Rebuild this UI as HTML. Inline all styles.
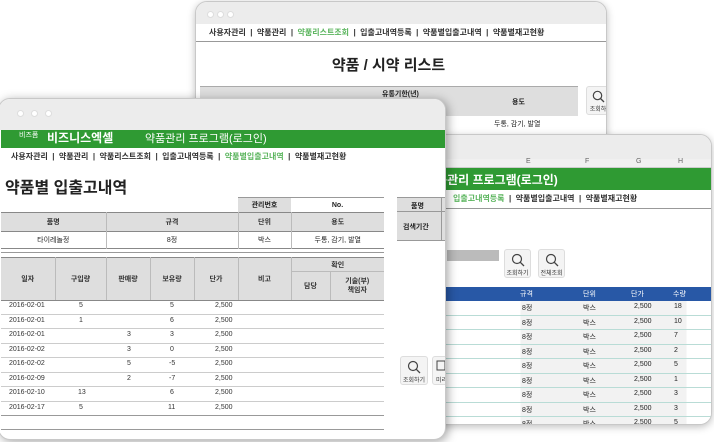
<!DOCTYPE html>
<html><head><meta charset="utf-8"><style>
*{margin:0;padding:0;box-sizing:border-box}
body{width:714px;height:442px;background:#fff;position:relative;overflow:hidden;font-family:"Liberation Sans","Noto Sans CJK KR",sans-serif;color:#222}
.win{position:absolute;background:#fff;border:1px solid #c8c8c8;border-radius:12px;overflow:hidden;box-shadow:0 2px 8px rgba(0,0,0,.25)}
.tb{position:absolute;left:0;right:0;top:0;background:#ececec}
.dot{position:absolute;width:7px;height:7px;border-radius:50%;background:#fff;border:1px solid #ddd}
.a{position:absolute;white-space:nowrap}
.s{font-size:7px}
.n{font-size:8px;font-weight:bold;color:#333}
.g{background:#2f9a33}
table{border-collapse:collapse;position:absolute;font-size:7px}
td{text-align:center;white-space:nowrap}
.h td{background:#dedede;font-weight:bold;color:#333}
.btn{position:absolute;width:27px;height:29px;border:1px solid #ddd;border-radius:3px;background:#f4f4f4;font-size:6px;text-align:center;color:#333}
.btn svg{display:block;margin:3px auto 1px}
</style></head><body>

<!-- back window -->
<div class="win" style="left:195px;top:1px;width:412px;height:160px">
 <div class="tb" style="height:22px"></div>
 <div class="dot" style="left:11px;top:9px"></div><div class="dot" style="left:21px;top:9px"></div><div class="dot" style="left:31px;top:9px"></div>
 <div class="a n" style="left:13px;top:25px;font-size:8px">사용자관리 &nbsp;|&nbsp; 약품관리 &nbsp;|&nbsp; <span style="color:#5bb55e">약품리스트조회</span> &nbsp;|&nbsp; 입출고내역등록 &nbsp;|&nbsp; 약품별입출고내역 &nbsp;|&nbsp; 약품별재고현황</div>
 <div style="position:absolute;left:0;right:0;top:39px;border-top:1px solid #999"></div>
 <div class="a" style="left:0;width:385px;text-align:center;top:52px;font-size:15px;font-weight:bold">약품 / 시약 리스트</div>
 <div style="position:absolute;left:4px;top:84px;width:378px;height:30px;background:#dedede;border-top:1px solid #aaa"></div>
 <div class="a s" style="left:186px;top:87px;font-weight:bold">유통기한(년)</div>
 <div class="a s" style="left:316px;top:95px;font-weight:bold">용도</div>
 <div class="a s" style="left:298px;top:117px">두통, 감기, 발열</div>
 <div class="btn" style="left:390px;top:84px;width:24px">
  <svg width="13" height="13" viewBox="0 0 13 13"><circle cx="5.5" cy="5.5" r="4.2" fill="none" stroke="#444" stroke-width="1.2"/><path d="M8.5 8.5L12 12" stroke="#444" stroke-width="1.3"/></svg>조회하</div>
</div>

<!-- middle window -->
<div class="win" style="left:380px;top:134px;width:332px;height:291px">
 <div class="tb" style="height:24px"></div>
 <div style="position:absolute;left:0;right:0;top:24px;height:9px;background:#f0f0f0;border-bottom:1px solid #ccc"></div>
 <div class="a s" style="left:145px;top:23px;color:#666">E</div><div class="a s" style="left:204px;top:23px;color:#666">F</div><div class="a s" style="left:255px;top:23px;color:#666">G</div><div class="a s" style="left:297px;top:23px;color:#666">H</div>
 <div class="g" style="position:absolute;left:0;right:0;top:33px;height:22px"></div>
 <div class="a" style="left:44px;top:36px;color:#fff;font-size:12px;font-weight:bold">약품관리 프로그램(로그인)</div>
 <div class="a n" style="left:72px;top:58px"><span style="color:#5bb55e">입출고내역등록</span> &nbsp;|&nbsp; 약품별입출고내역 &nbsp;|&nbsp; 약품별재고현황</div>
 <div style="position:absolute;left:0;right:0;top:73px;border-top:1px solid #999"></div>
 <div style="position:absolute;left:66px;top:115px;width:52px;height:11px;background:#bbb"></div>
 <div class="btn" style="left:123px;top:114px">
  <svg width="14" height="14" viewBox="0 0 14 14"><circle cx="6" cy="6" r="4.5" fill="none" stroke="#444" stroke-width="1.2"/><path d="M9.2 9.2L13 13" stroke="#444" stroke-width="1.3"/></svg>조회하기</div>
 <div class="btn" style="left:157px;top:114px">
  <svg width="14" height="14" viewBox="0 0 14 14"><circle cx="6" cy="6" r="4.5" fill="none" stroke="#444" stroke-width="1.2"/><path d="M9.2 9.2L13 13" stroke="#444" stroke-width="1.3"/></svg>전체조회</div>
 <div style="position:absolute;left:0;right:0;top:152px;height:14px;background:#2858a6"></div>
 <div class="a s" style="left:139px;top:154px;color:#fff">규격</div><div class="a s" style="left:202px;top:154px;color:#fff">단위</div><div class="a s" style="left:250px;top:154px;color:#fff">단가</div><div class="a s" style="left:292px;top:154px;color:#fff">수량</div>
 <div style="position:absolute;left:0;top:166px;width:332px">
  <div style="height:14.5px;border-bottom:1px solid #b9dcd6;font-size:7px;position:relative;background:linear-gradient(90deg,#fff 0,#fff 42%,#f2f2f2 42%,#f2f2f2 92%,#fff 92%)"><span class="a" style="left:141px;top:2px">8정</span><span class="a" style="left:202px;top:2px">박스</span><span class="a" style="left:253px;top:2px">2,500</span><span class="a" style="left:293px;top:2px">18</span></div>
  <div style="height:14.5px;border-bottom:1px solid #b9dcd6;font-size:7px;position:relative;background:linear-gradient(90deg,#fff 0,#fff 42%,#f2f2f2 42%,#f2f2f2 92%,#fff 92%)"><span class="a" style="left:141px;top:2px">8정</span><span class="a" style="left:202px;top:2px">박스</span><span class="a" style="left:253px;top:2px">2,500</span><span class="a" style="left:293px;top:2px">10</span></div>
  <div style="height:14.5px;border-bottom:1px solid #b9dcd6;font-size:7px;position:relative;background:linear-gradient(90deg,#fff 0,#fff 42%,#f2f2f2 42%,#f2f2f2 92%,#fff 92%)"><span class="a" style="left:141px;top:2px">8정</span><span class="a" style="left:202px;top:2px">박스</span><span class="a" style="left:253px;top:2px">2,500</span><span class="a" style="left:293px;top:2px">7</span></div>
  <div style="height:14.5px;border-bottom:1px solid #b9dcd6;font-size:7px;position:relative;background:linear-gradient(90deg,#fff 0,#fff 42%,#f2f2f2 42%,#f2f2f2 92%,#fff 92%)"><span class="a" style="left:141px;top:2px">8정</span><span class="a" style="left:202px;top:2px">박스</span><span class="a" style="left:253px;top:2px">2,500</span><span class="a" style="left:293px;top:2px">2</span></div>
  <div style="height:14.5px;border-bottom:1px solid #b9dcd6;font-size:7px;position:relative;background:linear-gradient(90deg,#fff 0,#fff 42%,#f2f2f2 42%,#f2f2f2 92%,#fff 92%)"><span class="a" style="left:141px;top:2px">8정</span><span class="a" style="left:202px;top:2px">박스</span><span class="a" style="left:253px;top:2px">2,500</span><span class="a" style="left:293px;top:2px">5</span></div>
  <div style="height:14.5px;border-bottom:1px solid #b9dcd6;font-size:7px;position:relative;background:linear-gradient(90deg,#fff 0,#fff 42%,#f2f2f2 42%,#f2f2f2 92%,#fff 92%)"><span class="a" style="left:141px;top:2px">8정</span><span class="a" style="left:202px;top:2px">박스</span><span class="a" style="left:253px;top:2px">2,500</span><span class="a" style="left:293px;top:2px">1</span></div>
  <div style="height:14.5px;border-bottom:1px solid #b9dcd6;font-size:7px;position:relative;background:linear-gradient(90deg,#fff 0,#fff 42%,#f2f2f2 42%,#f2f2f2 92%,#fff 92%)"><span class="a" style="left:141px;top:2px">8정</span><span class="a" style="left:202px;top:2px">박스</span><span class="a" style="left:253px;top:2px">2,500</span><span class="a" style="left:293px;top:2px">3</span></div>
  <div style="height:14.5px;border-bottom:1px solid #b9dcd6;font-size:7px;position:relative;background:linear-gradient(90deg,#fff 0,#fff 42%,#f2f2f2 42%,#f2f2f2 92%,#fff 92%)"><span class="a" style="left:141px;top:2px">8정</span><span class="a" style="left:202px;top:2px">박스</span><span class="a" style="left:253px;top:2px">2,500</span><span class="a" style="left:293px;top:2px">3</span></div>
  <div style="height:14.5px;font-size:7px;position:relative;background:linear-gradient(90deg,#fff 0,#fff 42%,#f2f2f2 42%,#f2f2f2 92%,#fff 92%)"><span class="a" style="left:141px;top:2px">8정</span><span class="a" style="left:202px;top:2px">박스</span><span class="a" style="left:253px;top:2px">2,500</span><span class="a" style="left:293px;top:2px">5</span></div>
 </div>
</div>

<!-- front window -->
<div class="win" style="left:-2px;top:98px;width:448px;height:342px;box-shadow:2px 2px 10px rgba(0,0,0,.35)">
 <div class="tb" style="height:31px"></div>
 <div class="dot" style="left:18px;top:11px"></div><div class="dot" style="left:32px;top:11px"></div><div class="dot" style="left:46px;top:11px"></div>
 <div class="g" style="position:absolute;left:2px;right:0;top:31px;height:18px"></div>
 <div class="a" style="left:20px;top:31px;color:#fff;font-size:7px">비즈폼</div>
 <div class="a" style="left:48px;top:30px;color:#fff;font-size:12px;font-weight:bold">비즈니스엑셀</div>
 <div class="a" style="left:146px;top:31px;color:#fff;font-size:11px">약품관리 프로그램(로그인)</div>
 <div class="a n" style="left:12px;top:52px">사용자관리 &nbsp;|&nbsp; 약품관리 &nbsp;|&nbsp; 약품리스트조회 &nbsp;|&nbsp; 입출고내역등록 &nbsp;|&nbsp; <span style="color:#5bb55e">약품별입출고내역</span> &nbsp;|&nbsp; 약품별재고현황</div>
 <div class="a" style="left:6px;top:75px;font-size:16px;font-weight:bold">약품별 입출고내역</div>

 <table style="left:2px;top:98px;width:383px">
  <tr style="height:15px"><td style="width:105px;border:0"></td><td style="width:132px;border:0"></td><td style="width:53px;background:#dedede;font-weight:bold;border-top:1px solid #999">관리번호</td><td style="width:93px;border-top:1px solid #999;font-weight:bold">No.</td></tr>
  <tr class="h" style="height:19px;border-top:1px solid #888"><td style="border-right:1px solid #bbb">품명</td><td style="border-right:1px solid #bbb">규격</td><td style="border-right:1px solid #bbb">단위</td><td style="border-right:0">용도</td></tr>
  <tr style="height:17px;border-top:1px solid #888;border-bottom:1px solid #888"><td style="border-right:1px solid #bbb">타이레놀정</td><td style="border-right:1px solid #bbb">8정</td><td style="border-right:1px solid #bbb">박스</td><td>두통, 감기, 발열</td></tr>
 </table>
 <div style="position:absolute;left:2px;top:153px;width:383px;border-top:1px solid #999"></div>

 <table style="left:2px;top:158px;width:383px">
  <tr class="h" style="height:14px;border-top:1px solid #888"><td rowspan="2" style="width:54px;border-right:1px solid #bbb">일자</td><td rowspan="2" style="width:51px;border-right:1px solid #bbb">구입량</td><td rowspan="2" style="width:44px;border-right:1px solid #bbb">판매량</td><td rowspan="2" style="width:44px;border-right:1px solid #bbb">보유량</td><td rowspan="2" style="width:44px;border-right:1px solid #bbb">단가</td><td rowspan="2" style="width:53px;border-right:1px solid #bbb">비고</td><td colspan="2" style="border-bottom:1px solid #bbb">확인</td></tr>
  <tr class="h" style="height:28px"><td style="width:39px;border-right:1px solid #bbb">담당</td><td style="width:54px;line-height:9px">기술(부)<br>책임자</td></tr>
 </table>
 <div style="position:absolute;left:2px;top:201px;width:383px;border-top:1px solid #888"></div>
 <div style="position:absolute;left:2px;top:201px;width:383px;font-size:7px;color:#333">
  <div style="height:14.5px;border-bottom:1px solid #ccc;position:relative"><span class="a" style="left:8px;top:2px">2016-02-01</span><span class="a" style="left:78px;top:2px">5</span><span class="a" style="left:169px;top:2px">5</span><span class="a" style="left:214px;top:2px">2,500</span></div>
  <div style="height:14.5px;border-bottom:1px solid #ccc;position:relative"><span class="a" style="left:8px;top:2px">2016-02-01</span><span class="a" style="left:78px;top:2px">1</span><span class="a" style="left:169px;top:2px">6</span><span class="a" style="left:214px;top:2px">2,500</span></div>
  <div style="height:14.5px;border-bottom:1px solid #ccc;position:relative"><span class="a" style="left:8px;top:2px">2016-02-01</span><span class="a" style="left:126px;top:2px">3</span><span class="a" style="left:169px;top:2px">3</span><span class="a" style="left:214px;top:2px">2,500</span></div>
  <div style="height:14.5px;border-bottom:1px solid #ccc;position:relative"><span class="a" style="left:8px;top:2px">2016-02-02</span><span class="a" style="left:126px;top:2px">3</span><span class="a" style="left:169px;top:2px">0</span><span class="a" style="left:214px;top:2px">2,500</span></div>
  <div style="height:14.5px;border-bottom:1px solid #ccc;position:relative"><span class="a" style="left:8px;top:2px">2016-02-02</span><span class="a" style="left:126px;top:2px">5</span><span class="a" style="left:168px;top:2px">-5</span><span class="a" style="left:214px;top:2px">2,500</span></div>
  <div style="height:14.5px;border-bottom:1px solid #ccc;position:relative"><span class="a" style="left:8px;top:2px">2016-02-09</span><span class="a" style="left:126px;top:2px">2</span><span class="a" style="left:168px;top:2px">-7</span><span class="a" style="left:214px;top:2px">2,500</span></div>
  <div style="height:14.5px;border-bottom:1px solid #ccc;position:relative"><span class="a" style="left:8px;top:2px">2016-02-10</span><span class="a" style="left:77px;top:2px">13</span><span class="a" style="left:169px;top:2px">6</span><span class="a" style="left:214px;top:2px">2,500</span></div>
  <div style="height:14.5px;border-bottom:1px solid #999;position:relative"><span class="a" style="left:8px;top:2px">2016-02-17</span><span class="a" style="left:78px;top:2px">5</span><span class="a" style="left:167px;top:2px">11</span><span class="a" style="left:214px;top:2px">2,500</span></div>
  <div style="height:14px;border-bottom:1px solid #999"></div>
 </div>

 <!-- right-side partial form -->
 <div style="position:absolute;left:398px;top:98px;width:50px;height:15px;background:#dedede;border-top:1px solid #999;border-bottom:1px solid #999;font-size:7px;font-weight:bold;padding:3px 0 0 14px">품명</div>
 <div style="position:absolute;left:398px;top:113px;width:50px;height:29px;background:#dedede;border-bottom:1px solid #999;font-size:7px;font-weight:bold;padding:10px 0 0 6px">검색기간</div>
 <div style="position:absolute;left:442px;top:98px;width:1px;height:44px;background:#999"></div>
 <div class="btn" style="left:401px;top:257px;width:28px">
  <svg width="14" height="14" viewBox="0 0 14 14"><circle cx="6" cy="6" r="4.5" fill="none" stroke="#444" stroke-width="1.2"/><path d="M9.2 9.2L13 13" stroke="#444" stroke-width="1.3"/></svg>조회하기</div>
 <div class="btn" style="left:433px;top:257px;width:20px;text-align:left;padding-left:3px">
  <svg width="12" height="14" viewBox="0 0 12 14" style="margin:3px 0 1px"><rect x="1" y="1" width="8" height="9" fill="none" stroke="#444"/></svg>미리</div>
</div>
</body></html>
